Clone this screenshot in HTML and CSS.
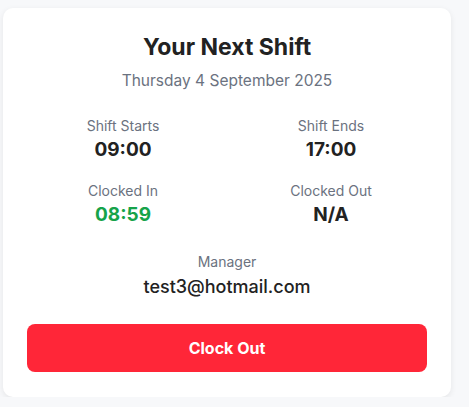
FILE: index.html
```html
<!DOCTYPE html>
<html lang="en">
<head>
  <meta charset="UTF-8">
  <title>Next Shift</title>
  <meta name="viewport" content="width=device-width, initial-scale=1.0">
  <link rel="stylesheet" href="styles.css">
</head>
<body>
  <div class="shift-card">
    <h2 class="shift-title">Your Next Shift</h2>
    <p class="shift-date">Thursday 4 September 2025</p>

    <div class="shift-grid">
      <div class="shift-item">
        <span class="label">Shift Starts</span>
        <span class="value">09:00</span>
      </div>
      <div class="shift-item">
        <span class="label">Shift Ends</span>
        <span class="value">17:00</span>
      </div>
      <div class="shift-item">
        <span class="label">Clocked In</span>
        <span class="value on-time">08:59</span>
      </div>
      <div class="shift-item">
        <span class="label">Clocked Out</span>
        <span class="value">N/A</span>
      </div>
    </div>

    <div class="manager">
      <span class="label">Manager</span>
      <span class="manager-email">test3@hotmail.com</span>
    </div>

    <button class="clock-btn">Clock Out</button>
  </div>
</body>
</html>
```
FILE: styles.css
```css
body {
  margin: 0;
  font-family: Inter, 'Noto Sans', sans-serif;
  background: #f7f8fa;
  color: #222222;
}
.shift-card {
  width: 448px;
  box-sizing: border-box;
  margin: 8px 0 0 3px;
  background: #ffffff;
  border-radius: 10px;
  padding: 25px 24px;
  box-shadow: 0 2px 6px rgba(0,0,0,0.08);
  text-align: center;
}
.shift-title {
  margin: 0;
  font-size: 23px;
  line-height: 29px;
  font-weight: 700;
  color: #222222;
}
.shift-date {
  margin: 7px 0 0;
  font-size: 15.5px;
  line-height: 24px;
  color: #6b7280;
}
.shift-grid {
  display: grid;
  grid-template-columns: 1fr 1fr;
  column-gap: 16px;
  row-gap: 17px;
  margin-top: 23px;
}
.shift-item,
.manager {
  display: flex;
  flex-direction: column;
  align-items: center;
}
.label {
  font-size: 14px;
  line-height: 20px;
  color: #6b7280;
}
.value {
  font-size: 19px;
  line-height: 28px;
  font-weight: 700;
  color: #222222;
}
.value.on-time {
  color: #16a34a;
}
.manager {
  margin-top: 23px;
}
.manager-email {
  font-size: 18px;
  line-height: 30px;
  font-weight: 500;
  color: #222222;
}
.clock-btn {
  display: block;
  width: 100%;
  height: 48px;
  margin-top: 22px;
  border: none;
  border-radius: 8px;
  background: #ff2638;
  color: #ffffff;
  font-family: inherit;
  font-size: 16px;
  font-weight: 700;
  cursor: pointer;
}
```
